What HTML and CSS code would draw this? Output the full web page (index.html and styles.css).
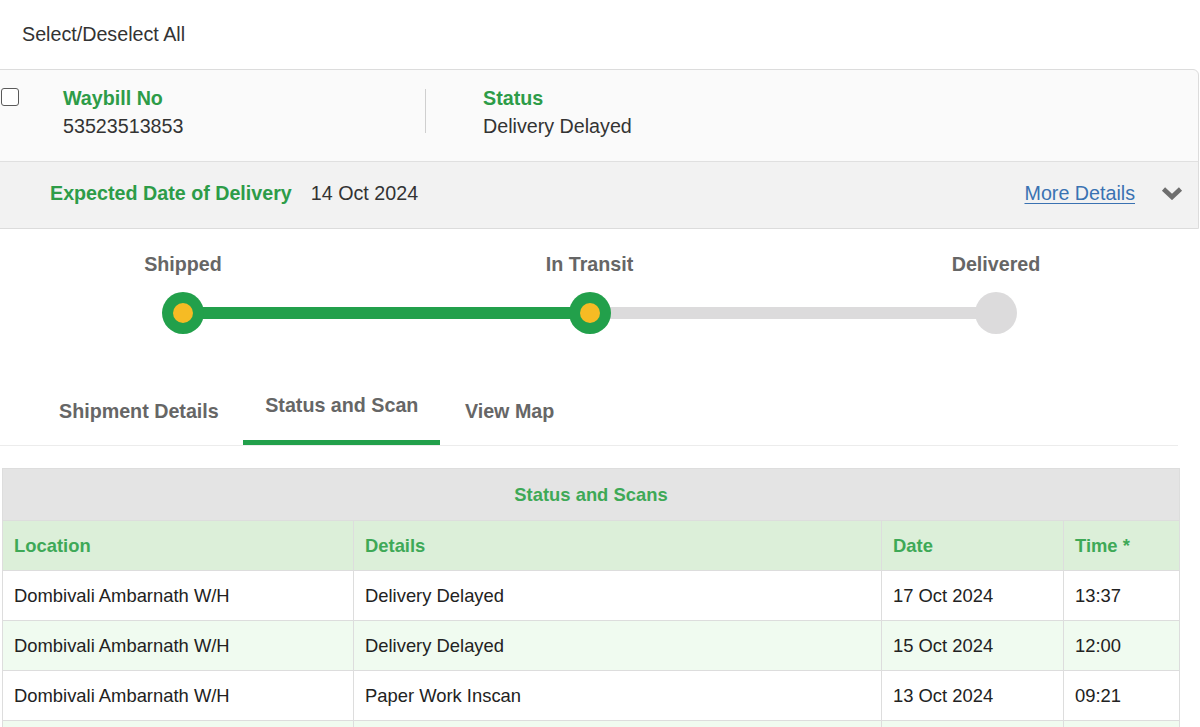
FILE: index.html
```html
<!DOCTYPE html>
<html>
<head>
<meta charset="utf-8">
<title>Status and Scans</title>
<link rel="stylesheet" href="styles.css">
</head>
<body>
<div class="page">
  <div class="select-all">Select/Deselect All</div>

  <div class="card">
    <div class="card-top">
      <input type="checkbox" class="chk">
      <div class="col col-waybill">
        <div class="label">Waybill No</div>
        <div class="value">53523513853</div>
      </div>
      <div class="divider"></div>
      <div class="col col-status">
        <div class="label">Status</div>
        <div class="value">Delivery Delayed</div>
      </div>
    </div>
    <div class="card-bottom">
      <span class="label">Expected Date of Delivery</span>
      <span class="edd">14 Oct 2024</span>
      <a class="more" href="#">More Details</a>
      <svg class="chev" width="22" height="14" viewBox="0 0 22 14">
        <polyline points="2.5,3 11,11 19.5,3" fill="none" stroke="#6f6f6f" stroke-width="4.6" stroke-linejoin="miter" stroke-linecap="butt"/>
      </svg>
    </div>
  </div>

  <div class="progress">
    <div class="plabel p1">Shipped</div>
    <div class="plabel p2">In Transit</div>
    <div class="plabel p3">Delivered</div>
    <div class="dot done d1"><span class="inner"></span></div>
    <div class="bar done b1"></div>
    <div class="dot done d2"><span class="inner"></span></div>
    <div class="bar todo b2"></div>
    <div class="dot todo d3"></div>
  </div>

  <div class="tabs">
    <div class="tab">Shipment Details</div>
    <div class="tab active">Status and Scan</div>
    <div class="tab">View Map</div>
  </div>

  <table class="scans">
    <colgroup>
      <col class="c-loc">
      <col class="c-det">
      <col class="c-date">
      <col class="c-time">
    </colgroup>
    <thead>
      <tr class="title-row"><th colspan="4">Status and Scans</th></tr>
      <tr class="head-row">
        <th>Location</th>
        <th>Details</th>
        <th>Date</th>
        <th>Time *</th>
      </tr>
    </thead>
    <tbody>
      <tr>
        <td>Dombivali Ambarnath W/H</td>
        <td>Delivery Delayed</td>
        <td>17 Oct 2024</td>
        <td>13:37</td>
      </tr>
      <tr class="alt">
        <td>Dombivali Ambarnath W/H</td>
        <td>Delivery Delayed</td>
        <td>15 Oct 2024</td>
        <td>12:00</td>
      </tr>
      <tr>
        <td>Dombivali Ambarnath W/H</td>
        <td>Paper Work Inscan</td>
        <td>13 Oct 2024</td>
        <td>09:21</td>
      </tr>
      <tr class="alt">
        <td></td>
        <td></td>
        <td></td>
        <td></td>
      </tr>
    </tbody>
  </table>
</div>
</body>
</html>
```

FILE: styles.css
```css
html, body {
  margin: 0;
  padding: 0;
  overflow: hidden;
  background: #ffffff;
}

body {
  font-family: "Liberation Sans", Arial, sans-serif;
  font-size: 19.7px;
  color: #333333;
}

.page {
  width: 1200px;
}

.select-all {
  padding: 23px 0 23px 22px;
  line-height: 23px;
  color: #333333;
}

/* Card */
.card {
  margin-left: -1px;
  width: 1200px;
  box-sizing: border-box;
  border: 1px solid #dcdcdc;
  border-top-right-radius: 6px;
  background: #fafafa;
}

.card-top {
  display: flex;
  align-items: flex-start;
  padding: 14px 0 21px 0;
  line-height: 28px;
}

.chk {
  appearance: none;
  -webkit-appearance: none;
  margin: 4px 0 0 1px;
  width: 18px;
  height: 18px;
  box-sizing: border-box;
  border: 1px solid #5a5a5a;
  border-radius: 3px;
  background: #ffffff;
}

.col-waybill {
  margin-left: 44px;
  width: 362px;
}

.divider {
  width: 1px;
  height: 44px;
  margin-top: 5px;
  background: #cfcfcf;
}

.col-status {
  margin-left: 57px;
}

.label {
  color: #2d9c48;
  font-weight: bold;
}

.value {
  color: #333333;
}

.card-bottom {
  display: flex;
  align-items: center;
  height: 62px;
  box-sizing: content-box;
  padding: 0 15px 4px 50px;
  border-top: 1px solid #e0e0e0;
  background: #f2f2f2;
}

.card-bottom .label {
  line-height: 23px;
}

.edd {
  margin-left: 19px;
  color: #333333;
}

.more {
  margin-left: auto;
  color: #3a72b2;
  text-decoration: underline;
  text-underline-offset: 3px;
}

.chev {
  margin-left: 26px;
  display: block;
}

/* Progress */
.progress {
  margin-left: 162px;
  width: 855px;
  padding-top: 24px;
  display: grid;
  grid-template-columns: 42px 1fr 42px 1fr 42px;
  grid-template-rows: 23px 42px;
  row-gap: 16px;
}

.plabel {
  grid-row: 1;
  display: flex;
  justify-content: center;
  white-space: nowrap;
  font-weight: bold;
  color: #666666;
  line-height: 23px;
}

.p1 { grid-column: 1; }
.p2 { grid-column: 3; }
.p3 { grid-column: 5; }

.dot {
  grid-row: 2;
  width: 42px;
  height: 42px;
  border-radius: 50%;
  display: flex;
  align-items: center;
  justify-content: center;
  position: relative;
  z-index: 1;
}

.d1 { grid-column: 1; }
.d2 { grid-column: 3; }
.d3 { grid-column: 5; }

.dot.done {
  background: #22a04b;
}

.dot.todo {
  background: #dcdbdc;
}

.inner {
  width: 20px;
  height: 20px;
  border-radius: 50%;
  background: #f6bb24;
}

.bar {
  grid-row: 2;
  align-self: center;
  height: 12px;
  margin: 0 -4px;
}

.b1 { grid-column: 2; }
.b2 { grid-column: 4; }

.bar.done {
  background: #22a04b;
}

.bar.todo {
  background: #dcdbdc;
}

/* Tabs */
.tabs {
  margin-top: 60px;
  width: 1178px;
  box-sizing: border-box;
  padding-left: 37px;
  display: flex;
  align-items: flex-end;
  border-bottom: 1px solid #ececec;
}

.tab {
  padding: 0 22px 22px 22px;
  margin-right: 2.5px;
  line-height: 23px;
  font-weight: bold;
  color: #666666;
}

.tab.active {
  padding-bottom: 23px;
  border-bottom: 5px solid #22a04b;
}

/* Table */
.scans {
  margin: 22px 0 0 2px;
  width: 1177px;
  border-collapse: collapse;
  table-layout: fixed;
  font-size: 18.4px;
}

.c-loc { width: 351px; }
.c-det { width: 528px; }
.c-date { width: 182px; }
.c-time { width: 116px; }

.scans th,
.scans td {
  border: 1px solid #dddddd;
  padding: 0 11px;
  text-align: left;
  white-space: nowrap;
}

.title-row th {
  height: 51px;
  background: #e4e4e4;
  text-align: center;
  color: #3ea957;
  font-weight: bold;
}

.head-row th {
  height: 49px;
  background: #dcefd9;
  color: #3ea957;
  font-weight: bold;
}

.scans td {
  height: 49px;
  color: #222222;
  background: #ffffff;
}

.scans tr.alt td {
  background: #f0fbf0;
}
```
